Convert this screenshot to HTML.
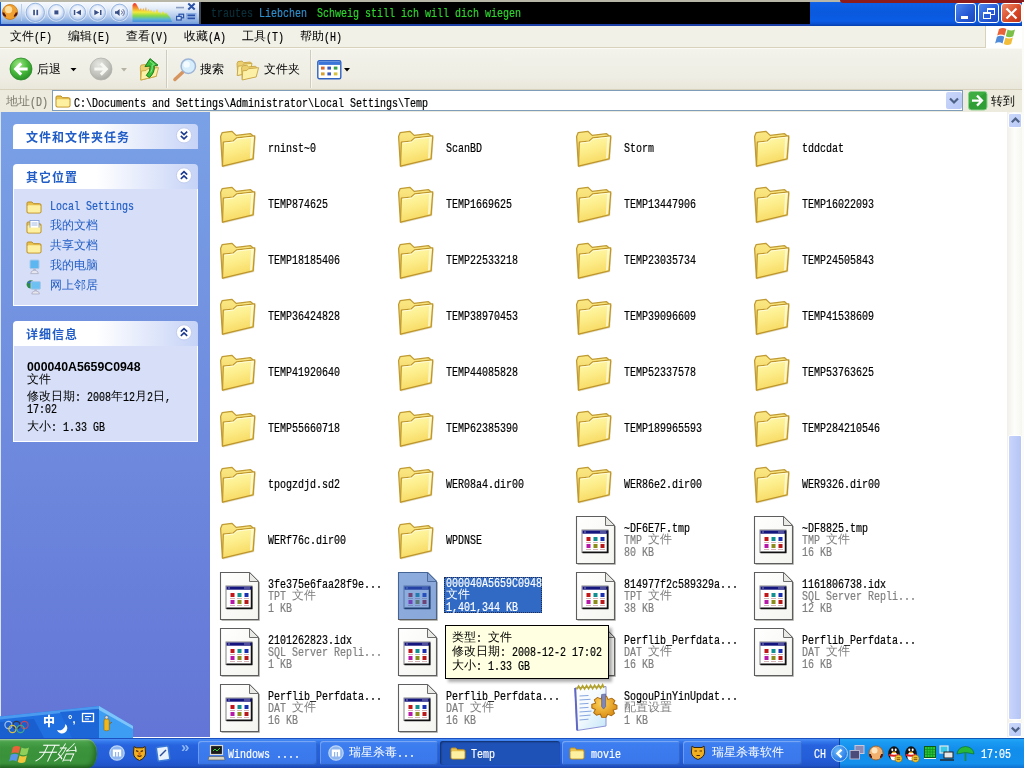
<!DOCTYPE html>
<html lang="zh-CN"><head><meta charset="utf-8"><title>Temp</title>
<style>
html,body{margin:0;padding:0}
body{width:1024px;height:768px;overflow:hidden;position:relative;background:#fff;
 font-family:"Liberation Mono","WenQuanYi Zen Hei",monospace;font-size:12px;color:#000;line-height:12px}
em.l{-webkit-text-stroke:.2px currentColor;font-style:normal;display:inline-block;position:static;font-size:13px;line-height:12px;height:12px;white-space:pre;transform:translateY(.6px) scaleX(.7692);transform-origin:0 50%;vertical-align:top}
div,svg,span{position:absolute;box-sizing:border-box}
.nm div,.nm3 div,.sel div,#tip div,.dt div{position:static;white-space:nowrap}
#title,#menu,#tool,#addr,#side,#main,#task,#sb{will-change:transform}
/* title */
#title{left:0;top:0;width:1024px;height:26px;background:linear-gradient(#2a6fe6 0,#0d5fe6 12%,#0a59dd 50%,#0b5de6 80%,#0a50cf 92%,#083fae 100%)}
#tgrey{left:0;top:0;width:1024px;height:2px;background:#b9b8a8}
#player{left:1px;top:2px;width:198px;height:22px;background:linear-gradient(#f7fafe 0,#e4edf9 28%,#b4cbed 65%,#86abdf 90%,#6f9ad8 100%)}
#lyr{left:205px;top:2px;width:605px;height:22px;background:#000}
#lyr span{top:5px;white-space:pre}
#tunder{left:0;top:24px;width:810px;height:2px;background:#1b3fa4}
.cap{top:3px;width:21px;height:20px;border:1px solid #fff;border-radius:3px}
/* menu */
#menu{left:0;top:26px;width:1024px;height:22px;background:#f2f1e7;border-bottom:1px solid #d8d2bd}
#menu span{top:5px;white-space:nowrap}
#logo{left:985px;top:0;width:37px;height:22px;background:#fff;border-left:1px solid #d8d2bd}
/* toolbar */
#tool{left:0;top:48px;width:1024px;height:41px;background:linear-gradient(#f3f2eb,#efeee4 70%,#e9e7db);border-top:1px solid #fbfaf6}
#tool .t{top:15px;white-space:nowrap}
.sep{top:1px;width:2px;height:38px;border-left:1px solid #cfccbd;border-right:1px solid #f8f7f1}
/* address */
#addr{left:0;top:89px;width:1024px;height:23px;background:#edebdd;border-top:1px solid #d8d2bd}
#afield{left:52px;top:0;width:911px;height:21px;background:#fff;border:1px solid #7f9db9}
/* side */
#side{left:0;top:112px;width:210px;height:626px;background:linear-gradient(#7aa1e6,#6375d6)}
.ph{left:13px;width:185px;height:25px;border-radius:4px 4px 0 0;background:linear-gradient(90deg,#fff 0,#fff 45%,#c6d3f7 100%);color:#215dc6;font-weight:bold}
.ph span{left:13px;top:8px;white-space:nowrap;font-family:'Liberation Sans','Noto Sans CJK SC',sans-serif;font-weight:bold;letter-spacing:1px}
.pb{left:13px;width:185px;background:#d6dff7;border:1px solid #fff;border-top:0}
.lnk{left:36px;color:#215dc6;white-space:nowrap;margin-top:-1px}
.dt{left:13px;white-space:nowrap}
/* main */
#main{left:210px;top:112px;width:797px;height:626px;background:#fff;overflow:hidden}
#main>*{margin-left:-210px;margin-top:-112px}
.nm,.nm3{white-space:nowrap}
.gr{color:#7e7e7e}
.sel{background:#316ac5;color:#fff;padding:0 0 0 2px;outline:1px dotted #1f2a4d;outline-offset:-1px}
.selic{width:39px;height:47px;background:rgba(49,106,197,.55);clip-path:polygon(0 0,30px 0,39px 9px,39px 47px,0 47px)}
#tip{left:445px;top:625px;width:164px;height:54px;background:#ffffe1;border:1px solid #000;padding:5px 6px;line-height:14px;box-shadow:3px 3px 3px rgba(0,0,0,.32)}
#tip em.l{line-height:14px;height:14px}
/* scrollbar */
#sb{left:1007px;top:112px;width:15px;height:626px;background:linear-gradient(90deg,#f1f0e9,#fdfdfb 50%,#f6f6f0)}
.sbtn{left:1px;width:14px;height:15px;border-radius:2px;background:linear-gradient(135deg,#cbd8fb,#b9c9f6);border:1px solid #fff}
#thumb{left:1px;top:323px;width:14px;height:285px;border-radius:2px;background:linear-gradient(90deg,#c9d5fb,#bccbf8 60%,#b5c5f5);border:1px solid #fff}
/* taskbar */
#task{left:0;top:738px;width:1024px;height:30px;background:linear-gradient(#1c4fbf 0,#1c4fbf 3.3%,#4a90f6 3.4%,#3478ec 12%,#2763de 24%,#245dd8 70%,#2053c8 92%,#1a43a8 100%)}
#tray{left:839px;top:0;width:185px;height:30px;background:linear-gradient(#0f58b4 0,#0f58b4 3.3%,#22a6f7 3.4%,#1b9af2 14%,#118deb 40%,#1290ec 85%,#0f70d0 100%);border-left:1px solid #0a3e9a}
#start{left:0;top:1px;width:97px;height:29px;border-radius:0 10px 9px 0/0 13px 14px 0;background:linear-gradient(#7cc07c 0,#4aa34a 10%,#3c953c 30%,#399139 60%,#3c953c 85%,#2d7a2d 100%);box-shadow:inset 0 1px 1px rgba(255,255,255,.3),inset -3px -2px 4px rgba(0,40,0,.35)}
.tb{top:3px;height:24px;border-radius:3px;background:linear-gradient(#4f8af0 0,#3c7df0 12%,#3a78ec 80%,#3570e0 100%);box-shadow:inset 1px 1px 0 rgba(255,255,255,.25),inset -1px -1px 0 rgba(0,0,0,.15);color:#fff}
.tb.on{background:#1e52b7;box-shadow:inset 1px 1px 2px rgba(0,0,0,.45)}
.tb span{left:27px;top:7px;white-space:nowrap}

#redge{left:1022px;top:2px;width:2px;height:736px;background:#fbfbf8}

</style></head>
<body>
<svg width="0" height="0" style="left:0;top:0">
<defs>
<linearGradient id="gF" x1="0" y1="0" x2="0.3" y2="1"><stop offset="0" stop-color="#fffbb2"/><stop offset=".5" stop-color="#fdee8c"/><stop offset="1" stop-color="#f7d962"/></linearGradient>
<linearGradient id="gB" x1="0" y1="0" x2="0" y2="1"><stop offset="0" stop-color="#fbe985"/><stop offset="1" stop-color="#ecc550"/></linearGradient>
<linearGradient id="gP" x1="0" y1="0" x2="1" y2="1"><stop offset="0" stop-color="#ffffff"/><stop offset="1" stop-color="#f4f4f0"/></linearGradient>
<linearGradient id="gN" x1="0" y1="0" x2="1" y2="1"><stop offset="0" stop-color="#ffffff"/><stop offset=".45" stop-color="#f4fafe"/><stop offset="1" stop-color="#c4e6f8"/></linearGradient>
<radialGradient id="gG" cx=".4" cy=".35" r=".7"><stop offset="0" stop-color="#ffd45a"/><stop offset="1" stop-color="#d88a12"/></radialGradient>
<radialGradient id="gGreen" cx=".4" cy=".3" r=".75"><stop offset="0" stop-color="#a0e884"/><stop offset=".55" stop-color="#46b83a"/><stop offset="1" stop-color="#258c25"/></radialGradient>
<radialGradient id="gGrey" cx=".4" cy=".3" r=".75"><stop offset="0" stop-color="#e6e6e2"/><stop offset=".6" stop-color="#c4c4be"/><stop offset="1" stop-color="#a7a7a1"/></radialGradient>
<radialGradient id="gBtn" cx=".5" cy=".42" r=".62"><stop offset="0" stop-color="#ffffff"/><stop offset=".5" stop-color="#e9f0fa"/><stop offset=".82" stop-color="#b7cdee"/><stop offset="1" stop-color="#8fb0e2"/></radialGradient>
<radialGradient id="gTray" cx=".4" cy=".35" r=".7"><stop offset="0" stop-color="#6cbcfa"/><stop offset="1" stop-color="#1c6ee2"/></radialGradient>
<linearGradient id="gSpec" gradientUnits="userSpaceOnUse" x1="0" y1="3" x2="0" y2="22"><stop offset="0" stop-color="#ee2a2a"/><stop offset=".28" stop-color="#f59a2e"/><stop offset=".48" stop-color="#f3ea3a"/><stop offset=".68" stop-color="#86d84e"/><stop offset=".85" stop-color="#58b4d2"/><stop offset="1" stop-color="#4a8ee0"/></linearGradient>

<symbol id="fold" viewBox="0 0 40 40">
 <path d="M5,38.9 L35.6,31.4 L37.2,9" fill="none" stroke="#d9d2b0" stroke-width="1.2" opacity=".7"/>
 <path d="M2.6,8.6 L4.2,4.6 L13.8,3.3 L18.2,7.4 L32.6,5.700 L35.2,8 L35,30 L4.4,38 Z" fill="url(#gB)" stroke="#c09a32" stroke-width="1.25" stroke-linejoin="round"/>
 <path d="M5.3,14.2 L15.2,13 L18.6,9.9 L36.8,7.8 L35.1,30.8 L4.5,38.2 Z" fill="url(#gF)" stroke="#be962c" stroke-width="1.25" stroke-linejoin="round"/>
 <path d="M6.400,15.100 L15.600,14 L19,11 L35.600,9.100" fill="none" stroke="#fffde0" stroke-width=".9"/>
 <path d="M33.300,9.600 L35.500,9.300 L34,30 L32,30.500 Z" fill="#fffbe2" opacity=".8"/>
</symbol>

<symbol id="sfold" viewBox="0 0 16 16">
 <path d="M1,4.2 Q1,3 2.2,3 L6,3 L7.5,4.7 L13.6,4.7 Q15,4.7 15,6 L15,12.8 Q15,14 13.6,14 L2.2,14 Q1,14 1,12.8 Z" fill="#e9c14f" stroke="#b98d22" stroke-width="1"/>
 <path d="M1.6,7.2 Q1.6,6.3 2.6,6.3 L13.4,6.3 Q14.4,6.3 14.4,7.2 L14.4,12.6 Q14.4,13.4 13.4,13.4 L2.6,13.4 Q1.6,13.4 1.6,12.6 Z" fill="#fdf0a0"/>
</symbol>

<symbol id="file" viewBox="0 0 44 52">
 <path d="M2.5,2.5 L31.5,2.5 L40.5,11.5 L40.5,49.5 L2.5,49.5 Z" fill="url(#gP)" stroke="#5e5e5e" stroke-width="1.100"/>
 <path d="M41.5,12 L41.5,50.5 L3.5,50.5" fill="none" stroke="#b8b8b4" stroke-width="1"/>
 <path d="M31.5,2.5 L31.5,11.5 L40.5,11.5 Z" fill="#e9e9e6" stroke="#6d6d6d" stroke-width="1" stroke-linejoin="round"/>
 <rect x="8" y="16" width="26" height="22.5" fill="#fff" stroke="#858585" stroke-width="1"/>
 <path d="M33.600,16.500 L33.600,38.400 L8.500,38.400" fill="none" stroke="#111" stroke-width="1.700"/>
 <rect x="8.5" y="16.5" width="25" height="3.2" fill="#15157e"/>
 <rect x="10.5" y="17.5" width="1" height="1" fill="#fff"/><rect x="26.5" y="17.5" width="1" height="1" fill="#fff"/><rect x="28.5" y="17.5" width="1" height="1" fill="#fff"/><rect x="30.5" y="17.5" width="1" height="1" fill="#fff"/>
 <rect x="12.5" y="23" width="4" height="4" fill="#c01818"/><rect x="19.5" y="23" width="4" height="4" fill="#109090"/><rect x="26.5" y="23" width="4" height="4" fill="#1830b0"/>
 <rect x="12.5" y="30" width="4" height="4" fill="#b818a8"/><rect x="19.5" y="30" width="4" height="4" fill="#8c8c18"/><rect x="26.5" y="30" width="4" height="4" fill="#b81818"/>
 <path d="M12,28.5h5M19,28.5h5M26,28.5h5M12,35.5h5M19,35.5h5M26,35.5h5" stroke="#c8a0a0" stroke-width=".8"/>
</symbol>

<symbol id="cfg" viewBox="0 0 44 52">
 <path d="M1,6 L32,4.500 L32,44 L3,48.500 Z" fill="url(#gN)" stroke="#8d93d6" stroke-width="1" stroke-linejoin="round"/>
 <path d="M1.200,6 L3.200,48.300" stroke="#6168c4" stroke-width="2"/>
 <path d="M5.500,14l9,-.5M5.500,18l11,-.7M5.500,22l9,-.6M5.500,26l9,-.6M5.500,30l12,-.9M5.500,34l11,-.9M5.500,38l9,-.8" stroke="#86a6de" stroke-width="1"/>
 <path d="M2.600,7.400 l2,-3.400 l2,3.200 l2,-3.400 l2,3.200 l2,-3.400 l2,3.200 l2,-3.400 l2,3.200 l2,-3.400 l2,3.200 l2,-3.400 l2,3.200 l2,-3.400 l1.400,3" fill="none" stroke="#b4a326" stroke-width="1.600"/>
 <g transform="translate(28.600,25.300) scale(1.120,.96) translate(-29,-24)">
 <path d="M29,11.500 l3.600,1 l1.200,3.400 l3.400,-1.400 l2.800,2.600 l-1.400,3.200 l3.200,1.600 l0,3.800 l-3.400,1.200 l1.200,3.400 l-2.800,2.600 l-3.200,-1.600 l-1.600,3.200 l-3.800,0 l-1.200,-3.400 l-3.400,1.200 l-2.600,-2.800 l1.600,-3.200 l-3.200,-1.600 l0,-3.800 l3.400,-1.200 l-1.200,-3.400 l2.800,-2.600 l3.200,1.600 Z" fill="url(#gG)" stroke="#a8660c" stroke-width=".9"/>
 </g>
 <path d="M27.600,12.500 l4,-.5 l0,12.500 l-2,2.600 l-2,-2.600 Z" fill="#8088b8" stroke="#4d5690" stroke-width=".6"/>
</symbol>
</defs>
</svg>

<div id="title">
 <div id="tgrey"></div>
 <div style="left:840px;top:0;width:184px;height:3px;background:#8e1c1c;border-radius:0 0 0 8px"></div>
 <div id="tunder"></div>
 <div id="player">
  <svg width="198" height="22" viewBox="1 2 198 22" style="left:0;top:0">
   <circle cx="10" cy="12" r="7.5" fill="#f0a030" stroke="#c07818" stroke-width=".8"/>
   <circle cx="8.6" cy="9.6" r="3.6" fill="#ffe9b0" opacity=".85"/>
   <path d="M3.6,12.5a2,2.6 0 0 0 2.4,3M16.4,12.5a2,2.6 0 0 1 -2.4,3" stroke="#5a1808" stroke-width="2.2" fill="none"/>
   <path d="M21.5,4v17" stroke="#b8cdea" stroke-width="1"/>
   <g fill="#fff" opacity=".55"><circle cx="35.300" cy="12.400" r="10.600"/><circle cx="56.400" cy="12.400" r="9.300"/><circle cx="77.700" cy="12.400" r="9.300"/><circle cx="97.600" cy="12.400" r="9.300"/><circle cx="119.500" cy="12.400" r="9.600"/></g>
   <g stroke="#86a8dc" stroke-width=".8">
    <circle cx="35.300" cy="12.400" r="9.200" fill="url(#gBtn)"/>
    <circle cx="56.400" cy="12.400" r="7.900" fill="url(#gBtn)"/>
    <circle cx="77.700" cy="12.400" r="7.900" fill="url(#gBtn)"/>
    <circle cx="97.600" cy="12.400" r="7.900" fill="url(#gBtn)"/>
    <circle cx="119.500" cy="12.400" r="8.300" fill="url(#gBtn)"/>
   </g>
   <g fill="#384f88">
    <rect x="33.200" y="9.800" width="1.700" height="5.400"/><rect x="36.400" y="9.800" width="1.700" height="5.400"/>
    <rect x="54.400" y="10.400" width="4" height="4"/>
    <rect x="73.800" y="10" width="1.500" height="5"/><path d="M81,9.800v5.400l-5,-2.700z"/>
    <rect x="100" y="10" width="1.500" height="5"/><path d="M94.300,9.800v5.400l5,-2.700z"/>
    <path d="M115,11.200h1.900l2.700,-2.200v7l-2.700,-2.200h-1.900z"/>
   </g>
   <path d="M121.400,10.600a2.600,2.600 0 0 1 0,3.800M122.800,9.200a4.400,4.400 0 0 1 0,6.600" stroke="#384f88" stroke-width=".9" fill="none"/>
   <path d="M132.5,22 L132.5,5 L134,3 L136,3.5 L138,7 L139.5,10 L141,8 L142,11 L143.5,8 L144.5,11 L146,7 L147,11.5 L148.5,9 L150,12 L151,9.5 L152.5,12.5 L154,10 L155.5,13 L157,9 L158.5,13 L160,11.5 L161.5,14 L163,11 L164.5,14 L166,12 L167.5,14.5 L169,16 L170.5,18 L172,22 Z" fill="url(#gSpec)"/>
   <g stroke="#2a52a6" fill="none">
    <path d="M176,7.6h8" stroke="#8a9cc0" stroke-width="1.6"/>
    <path d="M188.3,3.6l6.4,6M194.7,3.6l-6.4,6" stroke-width="2"/>
    <rect x="179" y="14.2" width="4.6" height="3.6" stroke-width="1.2"/><rect x="176.6" y="16.4" width="4.6" height="3.6" stroke-width="1.2" fill="#cfe0f6"/>
    <rect x="186.5" y="13.5" width="9.5" height="7" stroke="#8fb0e2" stroke-width="1" fill="#9dbdec"/>
    <path d="M187.5,15.4h7.5M187.5,18.4h7.5" stroke-width="1.6"/>
   </g>
  </svg>
 </div>
 <div style="left:199px;top:2px;width:2px;height:22px;background:#3c4654"></div>
 <div id="lyr" style="left:201px;width:609px">
  <span style="left:10px;color:#0d303b"><em class="l" style="width:42px">trautes</em></span><span style="left:58px;color:#2f8fcc"><em class="l" style="width:48px">Liebchen</em></span><span style="left:116px;color:#2fd62f"><em class="l" style="width:204px">Schweig still ich will dich wiegen</em></span>
 </div>
 <div class="cap" style="left:955px;background:linear-gradient(135deg,#4f86ee,#2458d4 60%,#1c47bd)"><div style="left:5px;top:12px;width:7px;height:3px;background:#fff"></div></div>
 <div class="cap" style="left:978px;background:linear-gradient(135deg,#4f86ee,#2458d4 60%,#1c47bd)"><div style="left:8px;top:4px;width:8px;height:7px;border:1px solid #fff;border-top-width:2px"></div><div style="left:4px;top:8px;width:8px;height:7px;border:1px solid #fff;border-top-width:2px;background:#2a5fd8"></div></div>
 <div class="cap" style="left:1001px;background:linear-gradient(135deg,#ee8a6a,#d84a28 55%,#bf3418)"><svg width="19" height="19" style="left:0;top:0"><path d="M4.5,4.5l10,10M14.5,4.5l-10,10" stroke="#fff" stroke-width="2.2"/></svg></div>
</div>

<div id="menu">
 <span style="left:10px">文件<em class="l" style="width:18px">(F)</em></span><span style="left:68px">编辑<em class="l" style="width:18px">(E)</em></span><span style="left:126px">查看<em class="l" style="width:18px">(V)</em></span><span style="left:184px">收藏<em class="l" style="width:18px">(A)</em></span><span style="left:242px">工具<em class="l" style="width:18px">(T)</em></span><span style="left:300px">帮助<em class="l" style="width:18px">(H)</em></span>
 <div id="logo"><svg width="24" height="20" viewBox="0 0 24 20" style="left:9px;top:0">
  <path d="M4,3 q4,-2.2 7.4,0 l-1.8,6.6 q-3.6,-2 -7.4,0 z" fill="#e8633a"/>
  <path d="M12.6,3.6 q3.6,2 7.4,0 l-1.8,6.6 q-3.8,2 -7.4,0 z" fill="#7cc04a"/>
  <path d="M1.9,10.8 q3.8,-2 7.4,0 l-1.8,6.6 q-3.6,-2.2 -7.4,0 z" fill="#4f8ad8"/>
  <path d="M10.5,11.4 q3.6,2 7.4,0 l-1.8,6.6 q-3.8,2 -7.4,0 z" fill="#f2bd3a"/>
 </svg></div>
</div>

<div id="tool">
 <svg width="24" height="24" style="left:9px;top:8px"><circle cx="12" cy="12" r="11" fill="url(#gGreen)" stroke="#2c8a28" stroke-width=".8"/><path d="M12.200,6.400L6.600,12L12.200,17.600M7.500,12H18.600" fill="none" stroke="#fff" stroke-width="2.900"/></svg>
 <span class="t" style="left:37px">后退</span>
 <svg width="8" height="5" style="left:70px;top:19px"><path d="M.5,0h6l-3,3.300z" fill="#000"/></svg>
 <svg width="24" height="24" style="left:89px;top:8px"><circle cx="12" cy="12" r="11" fill="url(#gGrey)" stroke="#b4b4ae" stroke-width=".8"/><path d="M11.800,6.400L17.400,12L11.800,17.600M16.500,12H5.400" fill="none" stroke="#f6f6f3" stroke-width="2.900"/></svg>
 <svg width="8" height="5" style="left:121px;top:19px"><path d="M0,0h6l-3,3.4z" fill="#b5b3a4"/></svg>
 <svg width="24" height="26" style="left:137px;top:7px" viewBox="0 0 24 26">
  <path d="M3.300,11.200l.8,-2.200l4.500,-.5l1.600,1.600l8.400,-.8l1.200,1.200l-.4,9.800l-15.600,3.800z" fill="#ecd070" stroke="#c7a545" stroke-width=".9"/>
  <path d="M4.400,15l4.600,-.5l1.700,-1.700l10.800,-1.200l-2.300,8.700l-15.400,3.700z" fill="#fcf0a6" stroke="#c7a545" stroke-width=".9"/>
  <path d="M13,2.600L21,9.200L17.200,9.600Q18.200,16.400 12.400,21.600L9.300,19.400Q13.600,15.200 13.200,10L8,10.600Z" fill="#38c038" stroke="#1a7a1a" stroke-width="1" stroke-linejoin="round"/>
  <path d="M13,5l4.600,3.800l-2.400,.3q.6,4 -1.600,7.500" fill="none" stroke="#8fe68f" stroke-width="1"/>
 </svg>
 <div class="sep" style="left:166px"></div>
 <svg width="28" height="26" style="left:171px;top:8px" viewBox="0 0 28 26">
  <path d="M12.500,14.500l-8.600,8" stroke="#d6955e" stroke-width="3.400" stroke-linecap="round"/>
  <circle cx="17.300" cy="9.200" r="7.200" fill="#d6eefc" stroke="#9db4d6" stroke-width="1.500"/>
  <circle cx="15.600" cy="7.400" r="3.200" fill="#f4fbff"/>
 </svg>
 <span class="t" style="left:200px">搜索</span>
 <svg width="26" height="24" style="left:235px;top:9px" viewBox="0 0 26 24">
  <path d="M2,5.600l.9,-2l4.200,-.5l1.600,1.600l6.600,-.7l.9,.9l0,9.600l-13.400,2.700z" fill="#ecd070" stroke="#c7a545" stroke-width=".9"/>
  <path d="M3,8.200l3.800,-.4l1.600,-1.600l8.600,-.9l-1.800,9.400l-13,2.900z" fill="#fcf0a6" stroke="#c7a545" stroke-width=".9"/>
  <path d="M6.600,9.800l.9,-2l4.400,-.5l1.600,1.600l7,-.7l.9,.9l-.2,9.400l-14,3z" fill="#ecd070" stroke="#c7a545" stroke-width=".9"/>
  <path d="M7.700,12.800l4.200,-.4l1.700,-1.700l10,-1l-2.400,9.200l-14,3.100z" fill="#fcf0a6" stroke="#c7a545" stroke-width=".9"/>
 </svg>
 <span class="t" style="left:264px">文件夹</span>
 <div class="sep" style="left:310px"></div>
 <svg width="25" height="20" style="left:317px;top:11px" viewBox="0 0 25 20">
  <rect x=".8" y=".8" width="23" height="18" rx="1.5" fill="#fff" stroke="#2f62c0" stroke-width="1.4"/>
  <rect x="1.5" y="1.5" width="21.6" height="3.4" fill="#3a74d8"/>
  <rect x="4" y="6.6" width="3.6" height="3" fill="#d86830"/><rect x="10.4" y="6.6" width="3.6" height="3" fill="#3858c0"/><rect x="16.8" y="6.6" width="3.6" height="3" fill="#38a048"/>
  <rect x="4" y="12.4" width="3.6" height="3" fill="#d8a030"/><rect x="10.4" y="12.4" width="3.6" height="3" fill="#3858c0"/><rect x="16.8" y="12.4" width="3.6" height="3" fill="#d8c040"/>
 </svg>
 <svg width="8" height="5" style="left:344px;top:19px"><path d="M0,0h6l-3,3.6z" fill="#000"/></svg>
</div>

<div id="addr">
 <span style="left:6px;top:6px;color:#7d7b6e;white-space:nowrap">地址<em class="l" style="width:18px">(D)</em></span>
 <div id="afield">
  <svg width="16" height="16" style="left:2px;top:2px"><use href="#sfold"/></svg>
  <span style="left:21px;top:6px;white-space:nowrap"><em class="l" style="width:354px">C:\Documents and Settings\Administrator\Local Settings\Temp</em></span>
  <div style="left:893px;top:1px;width:16px;height:17px;border-radius:2px;background:linear-gradient(135deg,#cad7fb,#b7c7f5)"><svg width="16" height="18" style="left:0;top:0"><path d="M4,6.5l4,4l4,-4" fill="none" stroke="#4d6185" stroke-width="2.2"/></svg></div>
 </div>
 <svg width="20" height="20" style="left:968px;top:1px"><rect x=".5" y=".5" width="18.5" height="18.5" rx="3" fill="#2f9e34" stroke="#8fd08f" stroke-width="1"/><path d="M1,1h17.5l-17.5,12z" fill="#48b84c" opacity=".6"/><path d="M4,9.6h8M9,4.6l5,5l-5,5" fill="none" stroke="#fff" stroke-width="2.2"/></svg>
 <span style="left:991px;top:6px;white-space:nowrap">转到</span>
</div>

<div id="side">
 <div style="left:0;top:0;width:1px;height:626px;background:#d9e4f8"></div>
 <div class="ph" style="top:12px"><span>文件和文件夹任务</span>
  <svg width="18" height="18" style="left:162px;top:2px"><circle cx="9" cy="9.4" r="7.6" fill="#fff" stroke="#c2cdee" stroke-width="1"/><path d="M5.8,5.6l3.2,3l3.2,-3M5.8,9.8l3.2,3l3.2,-3" fill="none" stroke="#1c3a8e" stroke-width="1.6"/></svg></div>
 <div class="ph" style="top:52px"><span>其它位置</span>
  <svg width="18" height="18" style="left:162px;top:2px"><circle cx="9" cy="9.4" r="7.6" fill="#fff" stroke="#c2cdee" stroke-width="1"/><path d="M5.8,8.6l3.2,-3l3.2,3M5.8,12.8l3.2,-3l3.2,3" fill="none" stroke="#1c3a8e" stroke-width="1.6"/></svg></div>
 <div class="pb" style="top:77px;height:117px">
  <svg width="16" height="16" style="left:12px;top:10px"><use href="#sfold"/></svg>
  <span class="lnk" style="top:12px"><em class="l" style="width:84px">Local Settings</em></span>
  <svg width="16" height="16" style="left:12px;top:30px"><use href="#sfold"/><rect x="4" y="1.5" width="9" height="8" fill="#fff" stroke="#7c9ad0" stroke-width=".8"/><path d="M5.5,4h6M5.5,6h6" stroke="#8aa8dc" stroke-width=".8"/><rect x="2" y="8.6" width="12" height="4.6" fill="#fdf0a0"/></svg>
  <span class="lnk" style="top:32px">我的文档</span>
  <svg width="16" height="16" style="left:12px;top:50px"><use href="#sfold"/></svg>
  <span class="lnk" style="top:52px">共享文档</span>
  <svg width="16" height="16" style="left:12px;top:70px"><rect x="4" y="1" width="9" height="8.6" rx="1" fill="#5cb6f0" stroke="#a8c8ea" stroke-width="1"/><path d="M5.5,12.4q3,-3 6,0l.8,2.2h-7.6z" fill="#e6e6ee" stroke="#9a9ab4" stroke-width=".6"/><rect x="7.3" y="9.6" width="2.4" height="2" fill="#b0b4cc"/></svg>
  <span class="lnk" style="top:72px">我的电脑</span>
  <svg width="16" height="16" style="left:12px;top:90px"><circle cx="4.8" cy="5.4" r="4.2" fill="#2e8c4a"/><path d="M2,4q2.6,-2 5,0" stroke="#3c6cd0" stroke-width="1.6" fill="none"/><rect x="5" y="2.6" width="9.4" height="7.6" rx="1" fill="#6cc0f2" stroke="#a8c8ea" stroke-width="1"/><path d="M6.4,13q3,-2.6 6.4,0l.6,2h-7.6z" fill="#e6e6ee" stroke="#9a9ab4" stroke-width=".6"/><rect x="8.4" y="10.2" width="2.4" height="2" fill="#b0b4cc"/></svg>
  <span class="lnk" style="top:92px">网上邻居</span>
 </div>
 <div class="ph" style="top:209px"><span>详细信息</span>
  <svg width="18" height="18" style="left:162px;top:2px"><circle cx="9" cy="9.4" r="7.6" fill="#fff" stroke="#c2cdee" stroke-width="1"/><path d="M5.8,8.6l3.2,-3l3.2,3M5.8,12.8l3.2,-3l3.2,3" fill="none" stroke="#1c3a8e" stroke-width="1.6"/></svg></div>
 <div class="pb" style="top:234px;height:96px">
  <div class="dt" style="top:15px"><div style="font-weight:bold;font-family:'Liberation Sans',sans-serif;font-size:12.3px;line-height:13px">000040A5659C0948</div><div>文件</div></div>
  <div class="dt" style="top:45px"><div>修改日期<em class="l" style="width:36px">: 2008</em>年<em class="l" style="width:12px">12</em>月<em class="l" style="width:6px">2</em>日<em class="l" style="width:6px">,</em></div><div><em class="l" style="width:30px">17:02</em></div></div>
  <div class="dt" style="top:75px"><div>大小<em class="l" style="width:54px">: 1.33 GB</em></div></div>
 </div>
</div>

<div id="main">
<svg class="ic" style="left:218px;top:128px" width="40" height="40"><use href="#fold"/></svg>
<div class="nm" style="left:268px;top:142px"><em class="l" style="width:48px">rninst~0</em></div>
<svg class="ic" style="left:396px;top:128px" width="40" height="40"><use href="#fold"/></svg>
<div class="nm" style="left:446px;top:142px"><em class="l" style="width:36px">ScanBD</em></div>
<svg class="ic" style="left:574px;top:128px" width="40" height="40"><use href="#fold"/></svg>
<div class="nm" style="left:624px;top:142px"><em class="l" style="width:30px">Storm</em></div>
<svg class="ic" style="left:752px;top:128px" width="40" height="40"><use href="#fold"/></svg>
<div class="nm" style="left:802px;top:142px"><em class="l" style="width:42px">tddcdat</em></div>
<svg class="ic" style="left:218px;top:184px" width="40" height="40"><use href="#fold"/></svg>
<div class="nm" style="left:268px;top:198px"><em class="l" style="width:60px">TEMP874625</em></div>
<svg class="ic" style="left:396px;top:184px" width="40" height="40"><use href="#fold"/></svg>
<div class="nm" style="left:446px;top:198px"><em class="l" style="width:66px">TEMP1669625</em></div>
<svg class="ic" style="left:574px;top:184px" width="40" height="40"><use href="#fold"/></svg>
<div class="nm" style="left:624px;top:198px"><em class="l" style="width:72px">TEMP13447906</em></div>
<svg class="ic" style="left:752px;top:184px" width="40" height="40"><use href="#fold"/></svg>
<div class="nm" style="left:802px;top:198px"><em class="l" style="width:72px">TEMP16022093</em></div>
<svg class="ic" style="left:218px;top:240px" width="40" height="40"><use href="#fold"/></svg>
<div class="nm" style="left:268px;top:254px"><em class="l" style="width:72px">TEMP18185406</em></div>
<svg class="ic" style="left:396px;top:240px" width="40" height="40"><use href="#fold"/></svg>
<div class="nm" style="left:446px;top:254px"><em class="l" style="width:72px">TEMP22533218</em></div>
<svg class="ic" style="left:574px;top:240px" width="40" height="40"><use href="#fold"/></svg>
<div class="nm" style="left:624px;top:254px"><em class="l" style="width:72px">TEMP23035734</em></div>
<svg class="ic" style="left:752px;top:240px" width="40" height="40"><use href="#fold"/></svg>
<div class="nm" style="left:802px;top:254px"><em class="l" style="width:72px">TEMP24505843</em></div>
<svg class="ic" style="left:218px;top:296px" width="40" height="40"><use href="#fold"/></svg>
<div class="nm" style="left:268px;top:310px"><em class="l" style="width:72px">TEMP36424828</em></div>
<svg class="ic" style="left:396px;top:296px" width="40" height="40"><use href="#fold"/></svg>
<div class="nm" style="left:446px;top:310px"><em class="l" style="width:72px">TEMP38970453</em></div>
<svg class="ic" style="left:574px;top:296px" width="40" height="40"><use href="#fold"/></svg>
<div class="nm" style="left:624px;top:310px"><em class="l" style="width:72px">TEMP39096609</em></div>
<svg class="ic" style="left:752px;top:296px" width="40" height="40"><use href="#fold"/></svg>
<div class="nm" style="left:802px;top:310px"><em class="l" style="width:72px">TEMP41538609</em></div>
<svg class="ic" style="left:218px;top:352px" width="40" height="40"><use href="#fold"/></svg>
<div class="nm" style="left:268px;top:366px"><em class="l" style="width:72px">TEMP41920640</em></div>
<svg class="ic" style="left:396px;top:352px" width="40" height="40"><use href="#fold"/></svg>
<div class="nm" style="left:446px;top:366px"><em class="l" style="width:72px">TEMP44085828</em></div>
<svg class="ic" style="left:574px;top:352px" width="40" height="40"><use href="#fold"/></svg>
<div class="nm" style="left:624px;top:366px"><em class="l" style="width:72px">TEMP52337578</em></div>
<svg class="ic" style="left:752px;top:352px" width="40" height="40"><use href="#fold"/></svg>
<div class="nm" style="left:802px;top:366px"><em class="l" style="width:72px">TEMP53763625</em></div>
<svg class="ic" style="left:218px;top:408px" width="40" height="40"><use href="#fold"/></svg>
<div class="nm" style="left:268px;top:422px"><em class="l" style="width:72px">TEMP55660718</em></div>
<svg class="ic" style="left:396px;top:408px" width="40" height="40"><use href="#fold"/></svg>
<div class="nm" style="left:446px;top:422px"><em class="l" style="width:72px">TEMP62385390</em></div>
<svg class="ic" style="left:574px;top:408px" width="40" height="40"><use href="#fold"/></svg>
<div class="nm" style="left:624px;top:422px"><em class="l" style="width:78px">TEMP189965593</em></div>
<svg class="ic" style="left:752px;top:408px" width="40" height="40"><use href="#fold"/></svg>
<div class="nm" style="left:802px;top:422px"><em class="l" style="width:78px">TEMP284210546</em></div>
<svg class="ic" style="left:218px;top:464px" width="40" height="40"><use href="#fold"/></svg>
<div class="nm" style="left:268px;top:478px"><em class="l" style="width:72px">tpogzdjd.sd2</em></div>
<svg class="ic" style="left:396px;top:464px" width="40" height="40"><use href="#fold"/></svg>
<div class="nm" style="left:446px;top:478px"><em class="l" style="width:78px">WER08a4.dir00</em></div>
<svg class="ic" style="left:574px;top:464px" width="40" height="40"><use href="#fold"/></svg>
<div class="nm" style="left:624px;top:478px"><em class="l" style="width:78px">WER86e2.dir00</em></div>
<svg class="ic" style="left:752px;top:464px" width="40" height="40"><use href="#fold"/></svg>
<div class="nm" style="left:802px;top:478px"><em class="l" style="width:78px">WER9326.dir00</em></div>
<svg class="ic" style="left:218px;top:520px" width="40" height="40"><use href="#fold"/></svg>
<div class="nm" style="left:268px;top:534px"><em class="l" style="width:78px">WERf76c.dir00</em></div>
<svg class="ic" style="left:396px;top:520px" width="40" height="40"><use href="#fold"/></svg>
<div class="nm" style="left:446px;top:534px"><em class="l" style="width:36px">WPDNSE</em></div>
<svg class="ic" style="left:574px;top:514px" width="44" height="52"><use href="#file"/></svg>
<div class="nm3" style="left:624px;top:522px"><div><em class="l" style="width:66px">~DF6E7F.tmp</em></div><div class="gr"><em class="l" style="width:24px">TMP </em>文件</div><div class="gr"><em class="l" style="width:30px">80 KB</em></div></div>
<svg class="ic" style="left:752px;top:514px" width="44" height="52"><use href="#file"/></svg>
<div class="nm3" style="left:802px;top:522px"><div><em class="l" style="width:66px">~DF8825.tmp</em></div><div class="gr"><em class="l" style="width:24px">TMP </em>文件</div><div class="gr"><em class="l" style="width:30px">16 KB</em></div></div>
<svg class="ic" style="left:218px;top:570px" width="44" height="52"><use href="#file"/></svg>
<div class="nm3" style="left:268px;top:578px"><div><em class="l" style="width:114px">3fe375e6faa28f9e...</em></div><div class="gr"><em class="l" style="width:24px">TPT </em>文件</div><div class="gr"><em class="l" style="width:24px">1 KB</em></div></div>
<svg class="ic" style="left:396px;top:570px" width="44" height="52"><use href="#file"/></svg>
<div class="selic" style="left:398px;top:572px"></div>
<div class="sel" style="left:444px;top:577px"><div><em class="l" style="width:96px">000040A5659C0948</em></div><div>文件</div><div><em class="l" style="width:72px">1,401,344 KB</em></div></div>
<svg class="ic" style="left:574px;top:570px" width="44" height="52"><use href="#file"/></svg>
<div class="nm3" style="left:624px;top:578px"><div><em class="l" style="width:114px">814977f2c589329a...</em></div><div class="gr"><em class="l" style="width:24px">TPT </em>文件</div><div class="gr"><em class="l" style="width:30px">38 KB</em></div></div>
<svg class="ic" style="left:752px;top:570px" width="44" height="52"><use href="#file"/></svg>
<div class="nm3" style="left:802px;top:578px"><div><em class="l" style="width:84px">1161806738.idx</em></div><div class="gr"><em class="l" style="width:114px">SQL Server Repli...</em></div><div class="gr"><em class="l" style="width:30px">12 KB</em></div></div>
<svg class="ic" style="left:218px;top:626px" width="44" height="52"><use href="#file"/></svg>
<div class="nm3" style="left:268px;top:634px"><div><em class="l" style="width:84px">2101262823.idx</em></div><div class="gr"><em class="l" style="width:114px">SQL Server Repli...</em></div><div class="gr"><em class="l" style="width:24px">1 KB</em></div></div>
<svg class="ic" style="left:396px;top:626px" width="44" height="52"><use href="#file"/></svg>
<svg class="ic" style="left:574px;top:626px" width="44" height="52"><use href="#file"/></svg>
<div class="nm3" style="left:624px;top:634px"><div><em class="l" style="width:114px">Perflib_Perfdata...</em></div><div class="gr"><em class="l" style="width:24px">DAT </em>文件</div><div class="gr"><em class="l" style="width:30px">16 KB</em></div></div>
<svg class="ic" style="left:752px;top:626px" width="44" height="52"><use href="#file"/></svg>
<div class="nm3" style="left:802px;top:634px"><div><em class="l" style="width:114px">Perflib_Perfdata...</em></div><div class="gr"><em class="l" style="width:24px">DAT </em>文件</div><div class="gr"><em class="l" style="width:30px">16 KB</em></div></div>
<svg class="ic" style="left:218px;top:682px" width="44" height="52"><use href="#file"/></svg>
<div class="nm3" style="left:268px;top:690px"><div><em class="l" style="width:114px">Perflib_Perfdata...</em></div><div class="gr"><em class="l" style="width:24px">DAT </em>文件</div><div class="gr"><em class="l" style="width:30px">16 KB</em></div></div>
<svg class="ic" style="left:396px;top:682px" width="44" height="52"><use href="#file"/></svg>
<div class="nm3" style="left:446px;top:690px"><div><em class="l" style="width:114px">Perflib_Perfdata...</em></div><div class="gr"><em class="l" style="width:24px">DAT </em>文件</div><div class="gr"><em class="l" style="width:30px">16 KB</em></div></div>
<svg class="ic" style="left:574px;top:682px" width="44" height="52"><use href="#cfg"/></svg>
<div class="nm3" style="left:624px;top:690px"><div><em class="l" style="width:114px">SogouPinYinUpdat...</em></div><div class="gr">配置设置</div><div class="gr"><em class="l" style="width:24px">1 KB</em></div></div>
<div id="tip"><div>类型<em class="l" style="width:12px">: </em>文件</div><div>修改日期<em class="l" style="width:102px">: 2008-12-2 17:02</em></div><div>大小<em class="l" style="width:54px">: 1.33 GB</em></div></div>
</div>
<div id="sb">
 <div class="sbtn" style="top:1px"><svg width="13" height="13" style="left:-.500px;top:0"><path d="M2.8,8.2l3.7,-3.7l3.7,3.7" fill="none" stroke="#4d6185" stroke-width="2.2"/></svg></div>
 <div id="thumb"></div>
 <div class="sbtn" style="top:610px"><svg width="13" height="13" style="left:-.500px;top:0"><path d="M2.8,4.6l3.7,3.7l3.7,-3.7" fill="none" stroke="#4d6185" stroke-width="2.2"/></svg></div>
</div>
<div id="redge"></div>

<div id="imeline" style="left:133px;top:737px;width:891px;height:1px;background:#fff"></div>
<svg id="ime" width="136" height="36" style="left:0;top:703px" viewBox="0 703 136 36">
 <path d="M0,716.5 L99,706 L99,738 L0,738 Z" fill="#1f6fe0"/>
 <path d="M0,716.5 L99,706 L99,709 L0,719.5 Z" fill="#4a9af0"/>
 <path d="M0,722 L34,719 L44,738 L0,738 Z" fill="#1a5fcf"/>
 <path d="M60,712 L99,709 L99,738 L72,738 Z" fill="#1d66d8"/>
 <path d="M99,706 L133,726 L133,738 L99,738 Z" fill="#3d9df2"/>
 <path d="M99,706 L133,726 L133,729 L99,710 Z" fill="#7cc4fa"/>
 <g fill="none" stroke-width="1.2"><circle cx="8.5" cy="725" r="3.6" stroke="#9fc0f0"/><circle cx="16.5" cy="725" r="3.6" stroke="#334"/><circle cx="24.5" cy="725" r="3.6" stroke="#c45"/><circle cx="12.5" cy="729" r="3.6" stroke="#d8c040"/><circle cx="20.5" cy="729" r="3.6" stroke="#4a8"/></g>
 <text x="43" y="726" font-family="'Liberation Sans','Noto Sans CJK SC',sans-serif" font-size="12" font-weight="900" fill="#fff">中</text>
 <path d="M65.5,724 a5.4,5.4 0 1 1 -8.6,6 a6.6,6.6 0 0 0 8.6,-6z" fill="#fff"/>
 <text x="68" y="723" font-family="'Liberation Sans','WenQuanYi Zen Hei',sans-serif" font-size="11" font-weight="bold" fill="#fff">°,</text>
 <rect x="82.5" y="713.5" width="11" height="8" fill="none" stroke="#fff" stroke-width="1.3"/><path d="M85,716.5h6M85,719h4" stroke="#fff" stroke-width="1"/>
 <path d="M104,721 q0,-2.4 2.6,-2.4 q2.6,0 2.6,2.4 v8.4 q0,1.4 -2.6,1.4 q-2.6,0 -2.6,-1.4z" fill="#f0b820" stroke="#8a6410" stroke-width=".6"/><circle cx="106.6" cy="717.4" r="1.7" fill="#ddd" stroke="#555" stroke-width=".5"/><path d="M109.4,724l2.6,-2" stroke="#8a6410" stroke-width="1"/>
</svg>
<div id="task">
 <div id="start">
  <svg width="24" height="22" viewBox="0 0 24 20" style="left:9px;top:4px">
   <path d="M4,3 q4,-2.2 7.4,0 l-1.8,6.6 q-3.6,-2 -7.4,0 z" fill="#e8633a"/>
   <path d="M12.6,3.6 q3.6,2 7.4,0 l-1.8,6.6 q-3.8,2 -7.4,0 z" fill="#8fd05a"/>
   <path d="M1.9,10.8 q3.8,-2 7.4,0 l-1.8,6.6 q-3.6,-2.2 -7.4,0 z" fill="#5a96e8"/>
   <path d="M10.500,11.4 q3.6,2 7.4,0 l-1.8,6.6 q-3.8,2 -7.4,0 z" fill="#f2c63a"/>
  </svg>
  <span style="left:36px;top:4px;color:#fff;font-style:italic;white-space:nowrap;font-family:'Liberation Sans','Noto Sans CJK SC',sans-serif;font-size:20px;letter-spacing:-1px;line-height:20px;transform:skewX(-12deg);font-weight:300">开始</span>
 </div>
 <svg width="90" height="30" style="left:105px;top:0">
  <circle cx="12" cy="15" r="7.200" fill="#8fb6ee" stroke="#bcd6f8" stroke-width="1.200"/><path d="M7.800,11.600h8.400v6.800h-2.200v-4.400h-1.200v4.400h-1.600v-4.400h-1.200v4.400h-2.200z" fill="#fff"/>
  <path d="M29,8.500l2.200,1.300h6.600l2.200,-1.300l.5,6.500q0,5 -6,7.500q-6,-2.500 -6,-7.500z" fill="#f0b020" stroke="#3a2608" stroke-width="1"/><path d="M31,12.600l2.400,1M38,12.600l-2.400,1M32.500,17.500q2,1.800 4,0" stroke="#5a2a08" stroke-width="1.200" fill="none"/><circle cx="34.500" cy="15.600" r="1.300" fill="#e06818"/>
  <rect x="52" y="8.500" width="12" height="14" rx="1.500" fill="#e8f2fc" stroke="#3a78d8" stroke-width="1.600" transform="rotate(-8 58 15)"/><path d="M55,18l6,-6" stroke="#2a4a9a" stroke-width="1.400"/>
  <text x="76" y="14" font-family="'Liberation Sans',sans-serif" font-size="15" font-weight="bold" fill="#8fb8f6">»</text>
 </svg>
 <div class="tb" style="left:198px;width:119px"><svg width="18" height="18" style="left:10px;top:3px"><rect x="2.500" y="1.500" width="12" height="9" fill="#1a1a1a" stroke="#d8d8d0" stroke-width="1.200"/><path d="M5,7l2,-2l2,2l3,-3" stroke="#3c3" stroke-width="1" fill="none"/><path d="M1,12.500h15l1,3.500h-17z" fill="#d8d4c4" stroke="#555" stroke-width=".6"/></svg><span style="left:30px"><em class="l" style="width:72px">Windows ....</em></span></div>
 <div class="tb" style="left:320px;width:118px"><svg width="18" height="18" style="left:7px;top:3px"><circle cx="9" cy="9" r="7.200" fill="#8fb6ee" stroke="#bcd6f8" stroke-width="1.200"/><path d="M4.800,5.600h8.400v6.800h-2.200v-4.400h-1.200v4.400h-1.600v-4.400h-1.200v4.400h-2.200z" fill="#fff"/></svg><span style="left:29px;top:6px">瑞星杀毒<em class="l" style="width:18px">...</em></span></div>
 <div class="tb on" style="left:440px;width:120px"><svg width="16" height="16" style="left:10px;top:4px"><use href="#sfold"/></svg><span style="left:31px"><em class="l" style="width:24px">Temp</em></span></div>
 <div class="tb" style="left:562px;width:118px"><svg width="16" height="16" style="left:7px;top:4px"><use href="#sfold"/></svg><span style="left:29px"><em class="l" style="width:30px">movie</em></span></div>
 <div class="tb" style="left:683px;width:119px"><svg width="18" height="18" style="left:6px;top:3px"><path d="M3,2l2,1.500h8l2,-1.500l.6,6q0,5 -6.600,7.500q-6.600,-2.500 -6.600,-7.500z" fill="#f0b020" stroke="#3a2608" stroke-width="1"/><path d="M5.500,7h2.400M10.600,7h2.400M7.500,11.500h3.400" stroke="#5a2a08" stroke-width="1.200"/></svg><span style="left:29px;top:6px">瑞星杀毒软件</span></div>
 <span style="left:814px;top:10px;color:#fff;white-space:nowrap"><em class="l" style="width:12px">CH</em></span>
 <div id="tray">
  <svg width="185" height="30" viewBox="839 738 185 30" style="left:-1px;top:0;overflow:visible">
   <circle cx="839.500" cy="753.500" r="8" fill="url(#gTray)" stroke="#a8d4fb" stroke-width="1"/><path d="M841.500,749.600l-4,3.900l4,3.900" stroke="#fff" stroke-width="2.400" fill="none"/>
   <rect x="855" y="745.500" width="9" height="8" fill="#8a8cb8" stroke="#c8c8dc" stroke-width="1"/><rect x="850" y="750.500" width="9.500" height="8.500" fill="#4c4c78" stroke="#b8b8d0" stroke-width="1"/>
   <circle cx="876" cy="753" r="7" fill="#f0b070" stroke="#a05818" stroke-width=".8"/><circle cx="874.500" cy="750.500" r="3" fill="#ffe6c0"/><path d="M870,754a2,3 0 0 0 2,3M882,754a2,3 0 0 1 -2,3" stroke="#5a1808" stroke-width="2" fill="none"/>
   <ellipse cx="894.0" cy="753.5" rx="5.8" ry="7.2" fill="#141414"/><ellipse cx="894.0" cy="756.6" rx="3.6" ry="4" fill="#fff"/><ellipse cx="892.3" cy="749.8" rx="1" ry="1.4" fill="#fff"/><ellipse cx="895.7" cy="749.8" rx="1" ry="1.4" fill="#fff"/><ellipse cx="894.0" cy="752.3" rx="2" ry=".9" fill="#f0b020"/><path d="M888.9,754.6q5,2.400 10.400,0" stroke="#e02020" stroke-width="2" fill="none"/><circle cx="898.5" cy="758.6" r="3.600" fill="#f4c830" stroke="#8a6410" stroke-width=".5"/><path d="M896.7,757.800h3.600M896.7,759.600h3.600" stroke="#7a4a08" stroke-width=".9"/>
   <ellipse cx="911.0" cy="753.5" rx="5.8" ry="7.2" fill="#141414"/><ellipse cx="911.0" cy="756.6" rx="3.6" ry="4" fill="#fff"/><ellipse cx="909.3" cy="749.8" rx="1" ry="1.4" fill="#fff"/><ellipse cx="912.7" cy="749.8" rx="1" ry="1.4" fill="#fff"/><ellipse cx="911.0" cy="752.3" rx="2" ry=".9" fill="#f0b020"/><path d="M905.9,754.6q5,2.400 10.400,0" stroke="#e02020" stroke-width="2" fill="none"/><circle cx="915.5" cy="758.6" r="3.600" fill="#f4c830" stroke="#8a6410" stroke-width=".5"/><path d="M913.7,757.800h3.600M913.7,759.600h3.600" stroke="#7a4a08" stroke-width=".9"/>
   <rect x="924.500" y="746.500" width="11" height="11" fill="#28c838" stroke="#0a5a14" stroke-width="1"/><path d="M927.300,747v10M930,747v10M932.700,747v10M925,749.500h10M925,752h10M925,754.500h10" stroke="#108a20" stroke-width=".7"/><path d="M924,758.500h12" stroke="#e8f8e8" stroke-width="1"/>
   <rect x="940" y="746" width="8" height="7" fill="#38c8e8" stroke="#e8e8e8" stroke-width="1.200"/><rect x="944" y="752" width="9" height="6" fill="#e8e8e8" stroke="#222" stroke-width="1"/><path d="M940,760h14" stroke="#222" stroke-width="1.400"/>
   <path d="M957,754q1,-7 8.500,-7.500q7.500,.5 8.500,7.500q-8.500,-3 -17,0z" fill="#28b838" stroke="#0a6a1a" stroke-width=".6"/><path d="M965.500,753v8" stroke="#1a8a4a" stroke-width="1.800"/>
  </svg>
  <span style="left:141px;top:10px;color:#fff;white-space:nowrap"><em class="l" style="width:30px">17:05</em></span>
 </div>
</div>

</body></html>
